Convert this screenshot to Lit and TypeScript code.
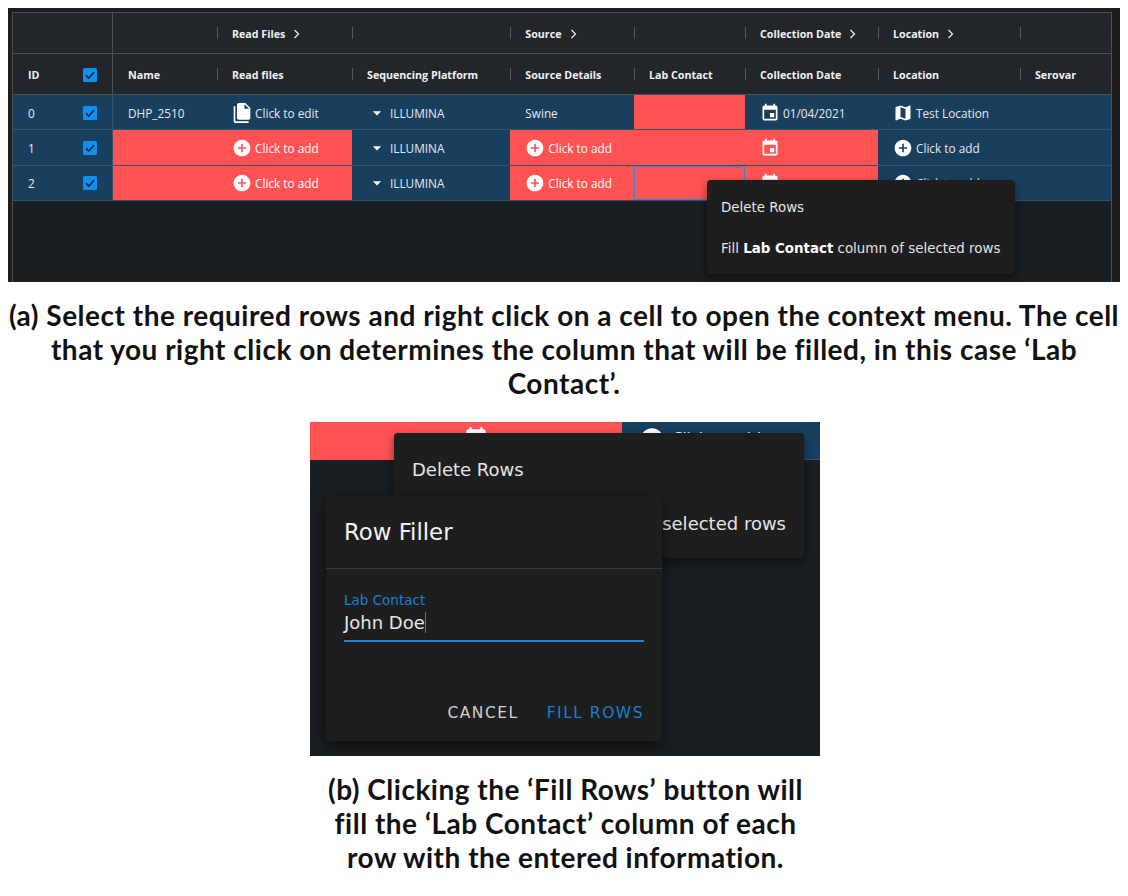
import { LitElement, html, css, svg } from 'lit';
import { customElement } from 'lit/decorators.js';

const icon = (d: unknown, size = 20) => html`<svg class="icon" width=${size} height=${size} viewBox="0 0 24 24" fill="currentColor">${d}</svg>`;

const addCircle = svg`<path d="M12 2C6.48 2 2 6.48 2 12s4.48 10 10 10 10-4.48 10-10S17.52 2 12 2zm5 11h-4v4h-2v-4H7v-2h4V7h2v4h4v2z"/>`;
const fileMultiple = svg`<path fill-rule="evenodd" d="M15 7h5.5L15 1.5V7M8 0h8l6 6v12a2 2 0 0 1-2 2H8c-1.11 0-2-.9-2-2V2a2 2 0 0 1 2-2M4 4v18h16v2H4a2 2 0 0 1-2-2V4h2z"/>`;
const calendar = svg`<path d="M17 12h-5v5h5v-5zM16 1v2H8V1H6v2H5c-1.11 0-1.99.9-1.99 2L3 19c0 1.1.89 2 2 2h14c1.1 0 2-.9 2-2V5c0-1.1-.9-2-2-2h-1V1h-2zm3 18H5V8h14v11z"/>`;
const mapIcon = svg`<path d="M20.5 3l-.16.03L15 5.1 9 3 3.36 4.9c-.21.07-.36.25-.36.48V20.5c0 .28.22.5.5.5l.16-.03L9 18.9l6 2.1 5.64-1.9c.21-.07.36-.25.36-.48V3.5c0-.28-.22-.5-.5-.5zM15 19l-6-2.11V5l6 2.11V19z"/>`;
const dropDown = svg`<path d="M7 10l5 5 5-5z"/>`;

const checkbox = html`<svg class="check" width="14" height="14" viewBox="0 0 14 14">
  <rect width="14" height="14" rx="1.5" fill="#0f8ff0"></rect>
  <path d="M3 7.2l2.8 2.8L11 4.2" fill="none" stroke="#14283a" stroke-width="1.6"></path>
</svg>`;

const chevron = html`<svg class="chev" width="8" height="10" viewBox="0 0 8 10">
  <path d="M1.5 1l4 4-4 4" fill="none" stroke="currentColor" stroke-width="1.2"></path>
</svg>`;

const addCell = html`<span class="iconed">${icon(addCircle)}Click to add</span>`;

const groups = ['', 'Read Files', '', 'Source', '', 'Collection Date', 'Location', ''];
const columns = ['Name', 'Read files', 'Sequencing Platform', 'Source Details', 'Lab Contact', 'Collection Date', 'Location', 'Serovar'];
const platform = html`<span class="iconed">${icon(dropDown)}ILLUMINA</span>`;

// one entry per row; bad cells are the red ones, focus is the outlined one
const rows = [
  {
    id: 0,
    bad: [4],
    focus: -1,
    cells: [
      'DHP_2510',
      html`<span class="iconed">${icon(fileMultiple)}Click to edit</span>`,
      platform,
      'Swine',
      '',
      html`<span class="iconed">${icon(calendar)}01/04/2021</span>`,
      html`<span class="iconed">${icon(mapIcon)}Test Location</span>`,
      '',
    ],
  },
  {
    id: 1,
    bad: [0, 1, 3, 4, 5],
    focus: -1,
    cells: ['', addCell, platform, addCell, '', html`<span class="iconed">${icon(calendar)}</span>`, addCell, ''],
  },
  {
    id: 2,
    bad: [0, 1, 3, 4, 5],
    focus: 4,
    cells: ['', addCell, platform, addCell, '', html`<span class="iconed">${icon(calendar)}</span>`, addCell, ''],
  },
];

@customElement('app-root')
export class AppRoot extends LitElement {
  static styles = css`
    :host {
      display: block;
      width: 1128px;
      height: 896px;
      background: #fff;
      overflow: hidden;
    }

    .shot-a {
      position: relative;
      margin: 8px 8px 0;
      height: 274px;
      padding: 4px 8px 0 4px;
      box-sizing: border-box;
      background: #1e1e1e;
      overflow: hidden;
    }

    .table {
      height: 100%;
      border: 1px solid #4c4f52;
      border-bottom: none;
      background: #1a1f23;
      font-family: 'Open Sans', sans-serif;
      font-size: 11.8px;
      color: #e8eaec;
    }

    .row {
      display: grid;
      grid-template-columns: 99px 1px 104px 135px 158.3px 123.7px 111px 133px 142px 1fr;
    }

    .head {
      height: 40px;
      background: #22262a;
      border-bottom: 1px solid #4c4f52;
      font-weight: 700;
      font-size: 10.7px;
      color: #f0f0f0;
    }

    .body {
      height: 35.33px;
      box-sizing: border-box;
      background: #193f5f;
      border-bottom: 1px solid #34536e;
    }

    .frozen {
      display: flex;
      align-items: center;
      justify-content: space-between;
      padding: 1px 15px 0;
    }

    .id-head {
      font-weight: 700;
    }

    .divider {
      background: #4c4f52;
    }

    .body .divider {
      background: #34536e;
    }

    .cell {
      position: relative;
      display: flex;
      align-items: center;
      gap: 6px;
      padding: 1px 0 0 15px;
      min-width: 0;
      white-space: nowrap;
    }

    .head .cell::before {
      content: '';
      position: absolute;
      right: -1px;
      top: 14px;
      height: 12px;
      width: 1px;
      background: #54585c;
    }

    .bad {
      background: #ff5252;
      color: #fff;
    }

    .focus {
      outline: 1px solid #3f7fd0;
      outline-offset: -1px;
    }

    .iconed {
      display: flex;
      align-items: center;
      gap: 3px;
    }

    .icon {
      flex: none;
      color: #fff;
    }

    .check {
      flex: none;
    }

    .chev {
      flex: none;
      margin-left: 2px;
    }

    .menu {
      position: absolute;
      background: #1e1e1e;
      border-radius: 4px;
      box-shadow: 0 4px 10px rgba(0, 0, 0, 0.45);
      font-family: 'DejaVu Sans', sans-serif;
      color: #e4e4e4;
      box-sizing: border-box;
    }

    .menu-a {
      left: 699px;
      top: 172px;
      width: 308px;
      height: 94px;
      font-size: 13.4px;
      display: flex;
      flex-direction: column;
      justify-content: space-between;
      padding: 20px 14px 18px;
    }

    .menu-a b {
      color: #fff;
    }

    .caption {
      font-family: 'Lato', sans-serif;
      font-weight: 700;
      font-size: 28px;
      letter-spacing: 0.5px;
      line-height: 34px;
      color: #111;
      text-align: center;
      margin: 0;
    }

    .caption-a {
      margin-top: 16px;
    }

    .caption-b {
      margin-top: 16px;
      padding-left: 3px;
    }

    .shot-b {
      position: relative;
      width: 510px;
      height: 334px;
      margin: 22px 0 0 310px;
      background: #1a1f23;
      overflow: hidden;
    }

    .strip {
      display: grid;
      grid-template-columns: 312px 1fr;
      height: 38px;
      color: #fff;
    }

    .strip-red {
      background: #ff5252;
    }

    .strip-navy {
      background: #193f5f;
      border-bottom: 1px solid #34536e;
    }

    .strip-cell {
      position: relative;
      overflow: hidden;
    }

    .strip-cal {
      position: absolute;
      left: 153px;
      top: 4px;
    }

    .strip-add {
      position: absolute;
      left: 16px;
      top: 4px;
      font-family: 'Open Sans', sans-serif;
      font-size: 16.5px;
      gap: 6px;
      display: flex;
      align-items: center;
      white-space: nowrap;
    }

    .strip-add span {
      margin-top: -6px;
    }

    .menu-b {
      left: 84px;
      top: 11px;
      width: 410px;
      height: 125px;
      font-size: 18px;
      padding: 26px 18px;
    }

    .menu-b .tail {
      position: absolute;
      right: 18px;
      top: 80px;
    }

    .dialog {
      position: absolute;
      left: 16px;
      top: 74px;
      width: 336px;
      height: 245px;
      background: #1e1e1e;
      border-radius: 4px;
      box-shadow: 0 6px 16px rgba(0, 0, 0, 0.5);
      font-family: 'DejaVu Sans', sans-serif;
      display: flex;
      flex-direction: column;
    }

    .dialog-title {
      height: 73px;
      box-sizing: border-box;
      padding: 23px 18px 0;
      font-size: 22.8px;
      color: #f2f2f2;
      border-bottom: 1px solid #38383a;
    }

    .field {
      margin: 23px 18px 0;
      padding-bottom: 5px;
      border-bottom: 2px solid #1a84e0;
    }

    .field-label {
      font-size: 13.5px;
      line-height: 16px;
      color: #1a7fd6;
    }

    .field-value {
      font-size: 18px;
      line-height: 24px;
      color: #e6e6e6;
      margin-top: 3px;
    }

    .caret {
      display: inline-block;
      width: 1.5px;
      height: 21px;
      background: #1a84e0;
      vertical-align: -4px;
    }

    .actions {
      margin-top: auto;
      display: flex;
      justify-content: flex-end;
      gap: 28px;
      padding: 0 18px 19px 0;
      font-size: 15.5px;
      letter-spacing: 1.5px;
      color: #d0d0d0;
    }

    .primary {
      color: #1a7fd6;
    }
  `;

  renderGrid() {
    return html`
      <div class="table">
        <div class="row head">
          <div class="frozen"></div>
          <div class="divider"></div>
          ${groups.map((g) => html`<div class="cell">${g}${g ? chevron : ''}</div>`)}
        </div>
        <div class="row head">
          <div class="frozen"><span class="id-head">ID</span>${checkbox}</div>
          <div class="divider"></div>
          ${columns.map((c) => html`<div class="cell">${c}</div>`)}
        </div>
        ${rows.map(
          (r) => html`
            <div class="row body">
              <div class="frozen"><span>${r.id}</span>${checkbox}</div>
              <div class="divider"></div>
              ${r.cells.map(
                (c, i) => html`<div class="cell ${r.bad.includes(i) ? 'bad' : ''} ${r.focus === i ? 'focus' : ''}">${c}</div>`
              )}
            </div>
          `
        )}
      </div>
    `;
  }

  render() {
    return html`
      <div class="shot-a">
        ${this.renderGrid()}
        <div class="menu menu-a">
          <div>Delete Rows</div>
          <div>Fill <b>Lab Contact</b> column of selected rows</div>
        </div>
      </div>
      <p class="caption caption-a">
        (a) Select the required rows and right click on a cell to open the context menu. The cell<br />
        that you right click on determines the column that will be filled, in this case ‘Lab<br />
        Contact’.
      </p>
      <div class="shot-b">
        <div class="strip">
          <div class="strip-cell strip-red"><span class="strip-cal">${icon(calendar, 26)}</span></div>
          <div class="strip-cell strip-navy"><div class="strip-add">${icon(addCircle, 28)}<span>Click to add</span></div></div>
        </div>
        <div class="menu menu-b">
          <div>Delete Rows</div>
          <div class="tail">selected rows</div>
        </div>
        <div class="dialog">
          <div class="dialog-title">Row Filler</div>
          <div class="field">
            <div class="field-label">Lab Contact</div>
            <div class="field-value">John Doe<span class="caret"></span></div>
          </div>
          <div class="actions"><span>CANCEL</span><span class="primary">FILL ROWS</span></div>
        </div>
      </div>
      <p class="caption caption-b">
        (b) Clicking the ‘Fill Rows’ button will<br />
        fill the ‘Lab Contact’ column of each<br />
        row with the entered information.
      </p>
    `;
  }
}
